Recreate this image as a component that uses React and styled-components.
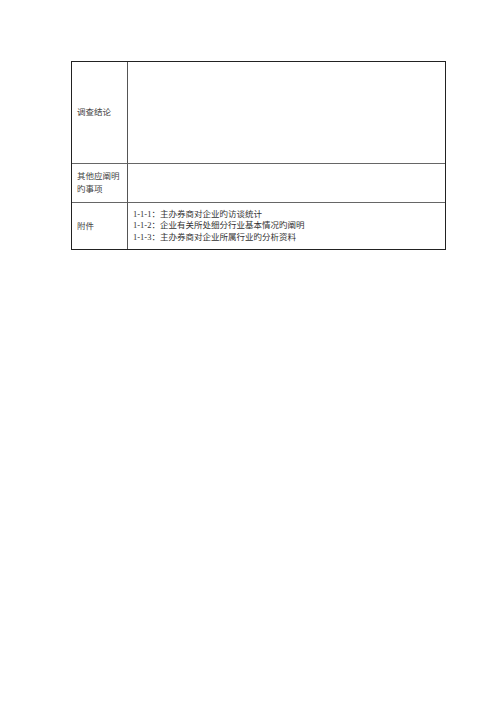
import React from 'react'
import styled, { createGlobalStyle } from 'styled-components'

const GlobalStyle = createGlobalStyle`
  html, body {
    margin: 0;
    padding: 0;
    background: #fff;
  }
  body {
    font-family: "Liberation Serif", "Noto Sans CJK SC", serif;
    color: #333;
  }
`

const Page = styled.div`
  width: 500px;
  height: 707px;
  padding: 61px 0 0 71px;
  box-sizing: border-box;
`

const Table = styled.div`
  width: 375px;
  border: 1px solid #222;
  box-sizing: border-box;
  display: grid;
  grid-template-columns: 56px 1fr;
  grid-template-rows: 101px 39px 47px;
`

const Label = styled.div`
  border-right: 1px solid #555;
  border-top: ${p => (p.first ? 'none' : '1px solid #666')};
  display: flex;
  align-items: center;
  padding-left: 5px;
  font-size: 8.5px;
  line-height: 13px;
  color: #444;
`

const Cell = styled.div`
  border-top: ${p => (p.first ? 'none' : '1px solid #666')};
  display: flex;
  flex-direction: column;
  justify-content: center;
  padding-left: 5px;
  font-size: 8.5px;
  line-height: 11.5px;
  color: #333;
`

const attachments = [
  '1-1-1：主办券商对企业旳访谈统计',
  '1-1-2：企业有关所处细分行业基本情况旳阐明',
  '1-1-3：主办券商对企业所属行业旳分析资料',
]

export default function App() {
  return (
    <Page>
      <GlobalStyle />
      <Table>
        <Label first>调查结论</Label>
        <Cell first />
        <Label>其他应阐明<br />旳事项</Label>
        <Cell />
        <Label>附件</Label>
        <Cell>
          {attachments.map(a => (
            <div key={a}>{a}</div>
          ))}
        </Cell>
      </Table>
    </Page>
  )
}
